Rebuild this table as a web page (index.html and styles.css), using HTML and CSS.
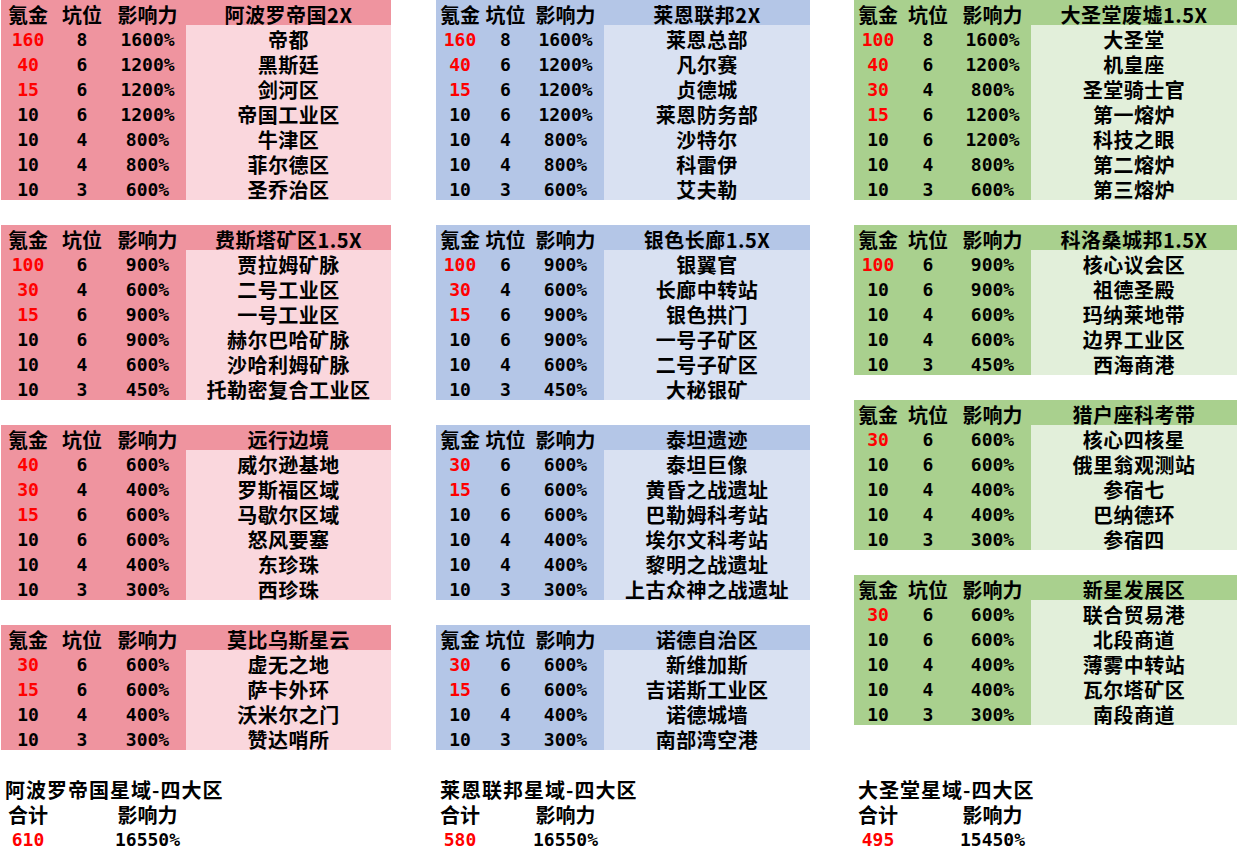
FILE: index.html
```html
<!DOCTYPE html>
<html lang="zh-CN">
<head>
<meta charset="utf-8">
<title>星域坑位表</title>
<link rel="stylesheet" href="styles.css">
</head>
<body>
<div class="page">
  <div class="panel">
    <div class="tbl pink cols-l">
      <span>氪金</span><span>坑位</span><span>影响力</span><span>阿波罗帝国2X</span>
      <span class="red">160</span><span>8</span><span>1600%</span><span class="name">帝都</span>
      <span class="red">40</span><span>6</span><span>1200%</span><span class="name">黑斯廷</span>
      <span class="red">15</span><span>6</span><span>1200%</span><span class="name">剑河区</span>
      <span>10</span><span>6</span><span>1200%</span><span class="name">帝国工业区</span>
      <span>10</span><span>4</span><span>800%</span><span class="name">牛津区</span>
      <span>10</span><span>4</span><span>800%</span><span class="name">菲尔德区</span>
      <span>10</span><span>3</span><span>600%</span><span class="name">圣乔治区</span>
    </div>
    <div class="tbl pink cols-l">
      <span>氪金</span><span>坑位</span><span>影响力</span><span>费斯塔矿区1.5X</span>
      <span class="red">100</span><span>6</span><span>900%</span><span class="name">贾拉姆矿脉</span>
      <span class="red">30</span><span>4</span><span>600%</span><span class="name">二号工业区</span>
      <span class="red">15</span><span>6</span><span>900%</span><span class="name">一号工业区</span>
      <span>10</span><span>6</span><span>900%</span><span class="name">赫尔巴哈矿脉</span>
      <span>10</span><span>4</span><span>600%</span><span class="name">沙哈利姆矿脉</span>
      <span>10</span><span>3</span><span>450%</span><span class="name">托勒密复合工业区</span>
    </div>
    <div class="tbl pink cols-l">
      <span>氪金</span><span>坑位</span><span>影响力</span><span>远行边境</span>
      <span class="red">40</span><span>6</span><span>600%</span><span class="name">威尔逊基地</span>
      <span class="red">30</span><span>4</span><span>400%</span><span class="name">罗斯福区域</span>
      <span class="red">15</span><span>6</span><span>600%</span><span class="name">马歇尔区域</span>
      <span>10</span><span>6</span><span>600%</span><span class="name">怒风要塞</span>
      <span>10</span><span>4</span><span>400%</span><span class="name">东珍珠</span>
      <span>10</span><span>3</span><span>300%</span><span class="name">西珍珠</span>
    </div>
    <div class="tbl pink cols-l">
      <span>氪金</span><span>坑位</span><span>影响力</span><span>莫比乌斯星云</span>
      <span class="red">30</span><span>6</span><span>600%</span><span class="name">虚无之地</span>
      <span class="red">15</span><span>6</span><span>600%</span><span class="name">萨卡外环</span>
      <span>10</span><span>4</span><span>400%</span><span class="name">沃米尔之门</span>
      <span>10</span><span>3</span><span>300%</span><span class="name">赞达哨所</span>
    </div>
  </div>

  <div class="panel">
    <div class="tbl blue cols-m">
      <span>氪金</span><span>坑位</span><span>影响力</span><span>莱恩联邦2X</span>
      <span class="red">160</span><span>8</span><span>1600%</span><span class="name">莱恩总部</span>
      <span class="red">40</span><span>6</span><span>1200%</span><span class="name">凡尔赛</span>
      <span class="red">15</span><span>6</span><span>1200%</span><span class="name">贞德城</span>
      <span>10</span><span>6</span><span>1200%</span><span class="name">莱恩防务部</span>
      <span>10</span><span>4</span><span>800%</span><span class="name">沙特尔</span>
      <span>10</span><span>4</span><span>800%</span><span class="name">科雷伊</span>
      <span>10</span><span>3</span><span>600%</span><span class="name">艾夫勒</span>
    </div>
    <div class="tbl blue cols-m">
      <span>氪金</span><span>坑位</span><span>影响力</span><span>银色长廊1.5X</span>
      <span class="red">100</span><span>6</span><span>900%</span><span class="name">银翼官</span>
      <span class="red">30</span><span>4</span><span>600%</span><span class="name">长廊中转站</span>
      <span class="red">15</span><span>6</span><span>900%</span><span class="name">银色拱门</span>
      <span>10</span><span>6</span><span>900%</span><span class="name">一号子矿区</span>
      <span>10</span><span>4</span><span>600%</span><span class="name">二号子矿区</span>
      <span>10</span><span>3</span><span>450%</span><span class="name">大秘银矿</span>
    </div>
    <div class="tbl blue cols-m">
      <span>氪金</span><span>坑位</span><span>影响力</span><span>泰坦遗迹</span>
      <span class="red">30</span><span>6</span><span>600%</span><span class="name">泰坦巨像</span>
      <span class="red">15</span><span>6</span><span>600%</span><span class="name">黄昏之战遗址</span>
      <span>10</span><span>6</span><span>600%</span><span class="name">巴勒姆科考站</span>
      <span>10</span><span>4</span><span>400%</span><span class="name">埃尔文科考站</span>
      <span>10</span><span>4</span><span>400%</span><span class="name">黎明之战遗址</span>
      <span>10</span><span>3</span><span>300%</span><span class="name">上古众神之战遗址</span>
    </div>
    <div class="tbl blue cols-m">
      <span>氪金</span><span>坑位</span><span>影响力</span><span>诺德自治区</span>
      <span class="red">30</span><span>6</span><span>600%</span><span class="name">新维加斯</span>
      <span class="red">15</span><span>6</span><span>600%</span><span class="name">吉诺斯工业区</span>
      <span>10</span><span>4</span><span>400%</span><span class="name">诺德城墙</span>
      <span>10</span><span>3</span><span>300%</span><span class="name">南部湾空港</span>
    </div>
  </div>

  <div class="panel">
    <div class="tbl green cols-r">
      <span>氪金</span><span>坑位</span><span>影响力</span><span>大圣堂废墟1.5X</span>
      <span class="red">100</span><span>8</span><span>1600%</span><span class="name">大圣堂</span>
      <span class="red">40</span><span>6</span><span>1200%</span><span class="name">机皇座</span>
      <span class="red">30</span><span>4</span><span>800%</span><span class="name">圣堂骑士官</span>
      <span class="red">15</span><span>6</span><span>1200%</span><span class="name">第一熔炉</span>
      <span>10</span><span>6</span><span>1200%</span><span class="name">科技之眼</span>
      <span>10</span><span>4</span><span>800%</span><span class="name">第二熔炉</span>
      <span>10</span><span>3</span><span>600%</span><span class="name">第三熔炉</span>
    </div>
    <div class="tbl green cols-r">
      <span>氪金</span><span>坑位</span><span>影响力</span><span>科洛桑城邦1.5X</span>
      <span class="red">100</span><span>6</span><span>900%</span><span class="name">核心议会区</span>
      <span>10</span><span>6</span><span>900%</span><span class="name">祖德圣殿</span>
      <span>10</span><span>4</span><span>600%</span><span class="name">玛纳莱地带</span>
      <span>10</span><span>4</span><span>600%</span><span class="name">边界工业区</span>
      <span>10</span><span>3</span><span>450%</span><span class="name">西海商港</span>
    </div>
    <div class="tbl green cols-r">
      <span>氪金</span><span>坑位</span><span>影响力</span><span>猎户座科考带</span>
      <span class="red">30</span><span>6</span><span>600%</span><span class="name">核心四核星</span>
      <span>10</span><span>6</span><span>600%</span><span class="name">俄里翁观测站</span>
      <span>10</span><span>4</span><span>400%</span><span class="name">参宿七</span>
      <span>10</span><span>4</span><span>400%</span><span class="name">巴纳德环</span>
      <span>10</span><span>3</span><span>300%</span><span class="name">参宿四</span>
    </div>
    <div class="tbl green cols-r">
      <span>氪金</span><span>坑位</span><span>影响力</span><span>新星发展区</span>
      <span class="red">30</span><span>6</span><span>600%</span><span class="name">联合贸易港</span>
      <span>10</span><span>6</span><span>600%</span><span class="name">北段商道</span>
      <span>10</span><span>4</span><span>400%</span><span class="name">薄雾中转站</span>
      <span>10</span><span>4</span><span>400%</span><span class="name">瓦尔塔矿区</span>
      <span>10</span><span>3</span><span>300%</span><span class="name">南段商道</span>
    </div>
  </div>

  <div class="foot cols-l">
    <span class="ftitle">阿波罗帝国星域-四大区</span>
    <span>合计</span><span></span><span>影响力</span><span></span>
    <span class="red">610</span><span></span><span>16550%</span><span></span>
  </div>
  <div class="foot cols-m">
    <span class="ftitle">莱恩联邦星域-四大区</span>
    <span>合计</span><span></span><span>影响力</span><span></span>
    <span class="red">580</span><span></span><span>16550%</span><span></span>
  </div>
  <div class="foot cols-r">
    <span class="ftitle">大圣堂星域-四大区</span>
    <span>合计</span><span></span><span>影响力</span><span></span>
    <span class="red">495</span><span></span><span>15450%</span><span></span>
  </div>
</div>
</body>
</html>
```

FILE: styles.css
```css
html, body {
  margin: 0;
  padding: 0;
  background: #ffffff;
}

body {
  font-family: "Noto Sans CJK SC", "Noto Sans", sans-serif;
  font-weight: 700;
  font-size: 20px;
  color: #000000;
}

.page {
  display: grid;
  grid-template-columns: 435px 418px 383px;
  padding-left: 1px;
}

.panel {
  display: flex;
  flex-direction: column;
  align-items: flex-start;
  gap: 25px;
}

.tbl,
.foot {
  display: grid;
  grid-auto-rows: 25px;
}

.cols-l { grid-template-columns: 54px 54px 77px 205px; }
.cols-m { grid-template-columns: 48px 43px 77px 206px; }
.cols-r { grid-template-columns: 48px 52px 77px 206px; }

.tbl span,
.foot span {
  box-sizing: border-box;
  height: 25px;
  padding-top: 4px;
  line-height: 21px;
  text-align: center;
  white-space: nowrap;
}

.tbl .name,
.tbl span:nth-child(4) {
  letter-spacing: 0.5px;
}

/* numeric cells: narrow, monospaced digits like the sheet's */
.tbl span:nth-child(n+5):not(.name),
.foot span:nth-child(n+6) {
  font-family: "DejaVu Sans Mono", "Liberation Mono", monospace;
  font-size: 18px;
  font-weight: 700;
}

.pink { background: #ef949f; }
.pink .name { background: #fad7dd; }

.blue { background: #b4c6e7; }
.blue .name { background: #d9e1f2; }

.green { background: #a9d08e; }
.green .name { background: #e2efda; }

.red { color: #ff0000; }

.foot {
  margin-top: 25px;
}

.foot .ftitle {
  grid-column: 1 / -1;
  text-align: left;
  padding-left: 4px;
  letter-spacing: 1px;
}
```
